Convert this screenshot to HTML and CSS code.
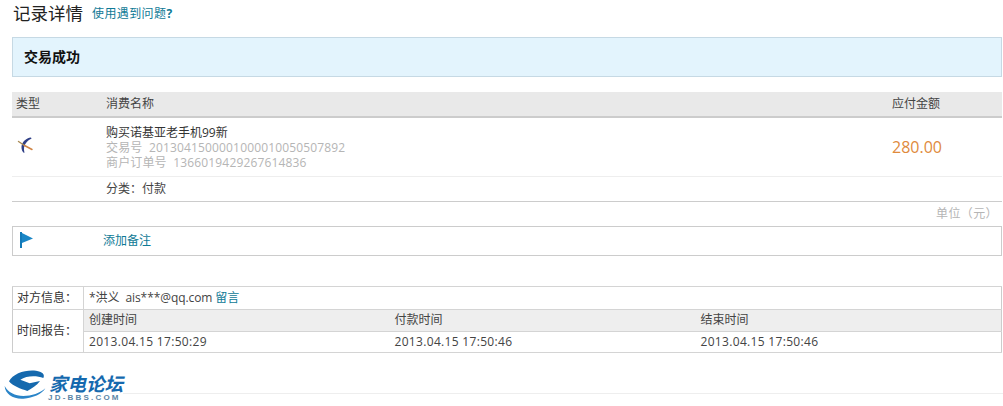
FILE: index.html
```html
<!DOCTYPE html>
<html lang="zh-CN">
<head>
<meta charset="utf-8">
<title>记录详情</title>
<link rel="stylesheet" href="styles.css">
</head>
<body>
<div class="page">
  <div class="title-row">
    <h1 class="title">记录详情</h1>
    <a class="help link">使用遇到问题<b>?</b></a>
  </div>
  <div class="banner">交易成功</div>

  <section class="bill">
    <div class="bill-head">
      <div class="col-type">类型</div>
      <div class="col-name">消费名称</div>
      <div class="col-amount">应付金额</div>
    </div>
    <div class="bill-row">
      <div class="col-type">
        <svg class="swallow" viewBox="0 0 20 20" width="20" height="20" aria-hidden="true">
          <path d="M15 2.500C10 3 6 7 5.500 11.500c-.2 2.500.6 5 2.500 6.500.3-.2.5-.5.4-.8C7.500 14 8 10.500 10 8c1.300-2 3-3.300 5.500-4.300z" fill="#2f3f86"/>
          <path d="M2.500 6.500L8.500 10.500" fill="none" stroke="#a98a55" stroke-width="1.400" stroke-linecap="round"/>
          <path d="M8.500 10.500L16 14.500" fill="none" stroke="#cf8445" stroke-width="1.500" stroke-linecap="round"/>
        </svg>
      </div>
      <div class="col-name">
        <div class="item-name">购买诺基亚老手机99新</div>
        <div class="item-meta">交易号&nbsp; 2013041500001000010050507892</div>
        <div class="item-meta">商户订单号&nbsp; 1366019429267614836</div>
      </div>
      <div class="col-amount price">280.00</div>
    </div>
    <div class="bill-cat">
      <div class="col-type"></div>
      <div class="col-name">分类：付款</div>
    </div>
  </section>
  <div class="unit">单位（元）</div>

  <div class="note">
    <svg class="flag" viewBox="0 0 14 16" width="14" height="16" aria-hidden="true">
      <path d="M0 0h2v16H0z" fill="#1279b8"/>
      <path d="M2 1l11 5.500L2 11z" fill="#1a86c6"/>
    </svg>
    <a class="link">添加备注</a>
  </div>

  <table class="info">
    <tr>
      <th class="info-label">对方信息：</th>
      <td colspan="3" class="party">*洪义&nbsp; ais***@qq.com <a class="link">留言</a></td>
    </tr>
    <tr class="time-head">
      <th class="info-label" rowspan="2">时间报告：</th>
      <td class="time-a">创建时间</td>
      <td class="time-b">付款时间</td>
      <td>结束时间</td>
    </tr>
    <tr class="time-row">
      <td>2013.04.15 17:50:29</td>
      <td>2013.04.15 17:50:46</td>
      <td>2013.04.15 17:50:46</td>
    </tr>
  </table>
</div>
<footer class="footer">
  <div class="logo">
    <svg class="logo-mark" viewBox="0 0 150 114" width="50" height="38" aria-hidden="true">
      <path d="M27 46C38 22 78 10 108 14c18 2.500 28 11 22 22C110 28 80 28 61 41l28 11 31-7C110 59 95 68 82 75 62 69 38 60 27 46z" fill="#1569ae"/>
      <path d="M14 60c1 24 26 40 56 38 30-2 55-13 66-31C120 82 95 90 70 90 45 90 24 79 14 60z" fill="#2a84c8"/>
    </svg>
    <div class="logo-text">
      <div class="logo-cn">家电论坛</div>
      <div class="logo-en">JD-BBS.COM</div>
    </div>
  </div>
</footer>
</body>
</html>
```

FILE: styles.css
```css
* { box-sizing: border-box; }
html, body { margin: 0; padding: 0; }
body {
  width: 1003px;
  height: 406px;
  overflow: hidden;
  background: #fff;
  color: #444;
  font: 12px/15px "Open Sans", "Noto Sans CJK SC", sans-serif;
  position: relative;
}
.page { padding: 0 1px 0 12px; }
.link { color: #0f7a96; }

.title-row { display: flex; align-items: center; height: 37px; padding: 0 0 11px; }
.title { margin: 0 0 0 1px; font-size: 17.500px; line-height: 26px; font-weight: 400; color: #222; }
.help { margin-left: 9px; letter-spacing: .4px; }

.banner {
  height: 40px;
  padding: 0 11px;
  background: #e3f4fd;
  border: 1px solid #c6d9e4;
  color: #111;
  font-size: 14px;
  font-weight: 700;
  line-height: 38px;
}

.bill { margin-top: 15px; }
.bill-head, .bill-row, .bill-cat { display: flex; }
.col-type { width: 94px; padding-left: 4px; flex: none; }
.col-name { flex: 1; }
.col-amount { width: 110px; flex: none; }
.bill-head {
  height: 26px;
  line-height: 24px;
  background: #e9e9e9;
  border-bottom: 2px solid #ccc;
}
.bill-row {
  height: 59px;
  padding-top: 7px;
  border-bottom: 1px solid #eee;
}
.swallow { margin-top: 10px; }
.item-name { color: #333; }
.item-meta { color: #b5b5b5; letter-spacing: .15px; }
.price {
  color: #e08a3c;
  font-size: 16px;
  line-height: 44px;
}
.bill-cat {
  height: 25px;
  line-height: 23px;
  border-bottom: 1px solid #ccc;
  color: #444;
}
.unit {
  height: 24px;
  padding-right: 4px;
  text-align: right;
  line-height: 24px;
  color: #b5b5b5;
  letter-spacing: .4px;
}

.note {
  display: flex;
  align-items: center;
  height: 30px;
  padding: 0 0 2px 7px;
  border: 1px solid #ccc;
}
.flag { flex: none; margin-right: 69px; }

.info {
  width: 990px;
  margin-top: 30px;
  border-collapse: collapse;
  table-layout: fixed;
  border: 1px solid #ccc;
}
.info th, .info td {
  border-top: 1px solid #d4d4d4;
  border-bottom: 1px solid #d4d4d4;
  padding: 0 0 2px 5px;
  text-align: left;
  font-weight: 400;
}
.info .info-label { width: 71px; padding-left: 4px; color: #333; border-right: 1px solid #d4d4d4; }
.party { height: 23px; letter-spacing: -.08px; }
.time-head td { height: 22px; background: #eee; }
.time-row td { height: 21px; letter-spacing: .32px; }
.time-a, .time-b { width: 306px; }

.footer { position: absolute; left: 0; right: 0; top: 393px; border-top: 1px solid #eee; }
.logo {
  position: absolute;
  left: 0;
  top: -28px;
  display: flex;
  background: #fff;
}
.logo-text { margin: 7px 0 0 -1px; }
.logo-cn {
  color: #1569ae;
  font: italic 700 18.500px/20px "Noto Sans CJK SC", sans-serif;
  white-space: nowrap;
}
.logo-en {
  margin: 1px 0 0 -1px;
  color: #5b85a6;
  font: 700 8px/7px "Liberation Sans", sans-serif;
  letter-spacing: 2.200px;
  white-space: nowrap;
}
```
